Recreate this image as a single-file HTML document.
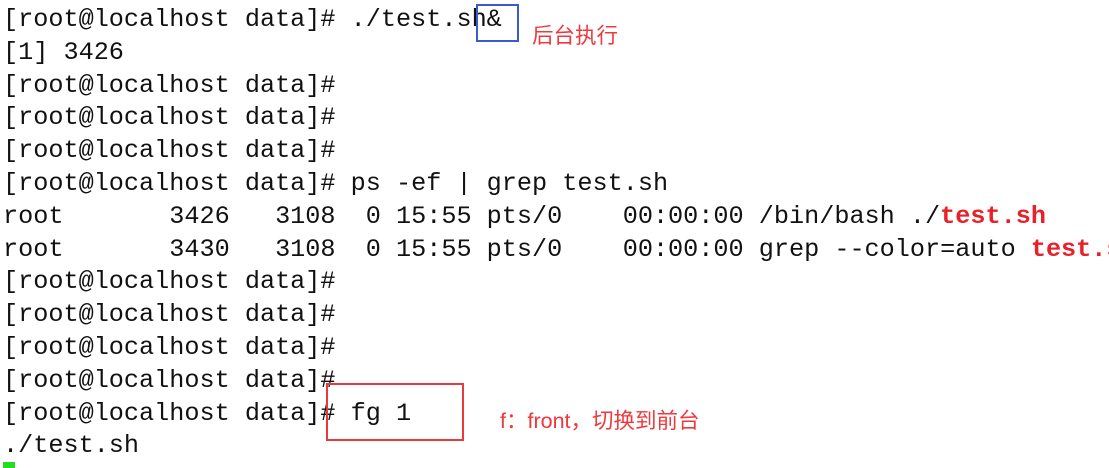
<!DOCTYPE html>
<html><head><meta charset="utf-8"><style>
html,body{margin:0;padding:0;background:#fff;width:1109px;height:468px;overflow:hidden;position:relative}
pre{position:absolute;left:3px;top:4px;margin:0;font-family:"Liberation Mono",monospace;font-size:25.2px;line-height:32.8px;color:#111;white-space:pre}
.r{color:#e8202a;font-weight:bold}
.box{position:absolute;border:2px solid}
.lbl{position:absolute;color:#f0383c;font-family:"Liberation Sans","Noto Sans CJK SC",sans-serif;font-size:21.5px;white-space:nowrap}
</style></head><body>
<pre>[root@localhost data]# ./test.sh&amp;
[1] 3426
[root@localhost data]#
[root@localhost data]#
[root@localhost data]#
[root@localhost data]# ps -ef | grep test.sh
root       3426   3108  0 15:55 pts/0    00:00:00 /bin/bash ./<span class="r">test.sh</span>
root       3430   3108  0 15:55 pts/0    00:00:00 grep --color=auto <span class="r">test.sh</span>
[root@localhost data]#
[root@localhost data]#
[root@localhost data]#
[root@localhost data]#
[root@localhost data]# fg 1
./test.sh</pre>
<div class="box" style="left:476px;top:4px;width:39px;height:34px;border-color:#3a5bd0"></div>
<div class="box" style="left:326px;top:383px;width:134px;height:54px;border-color:#e83a3a"></div>
<div class="lbl" style="left:532px;top:19px">后台执行</div>
<div class="lbl" style="left:500px;top:404px;word-spacing:3px">f：front，切换到前台</div>
<div style="position:absolute;left:3px;top:462px;width:12px;height:6px;background:#1ee01e"></div>
</body></html>
